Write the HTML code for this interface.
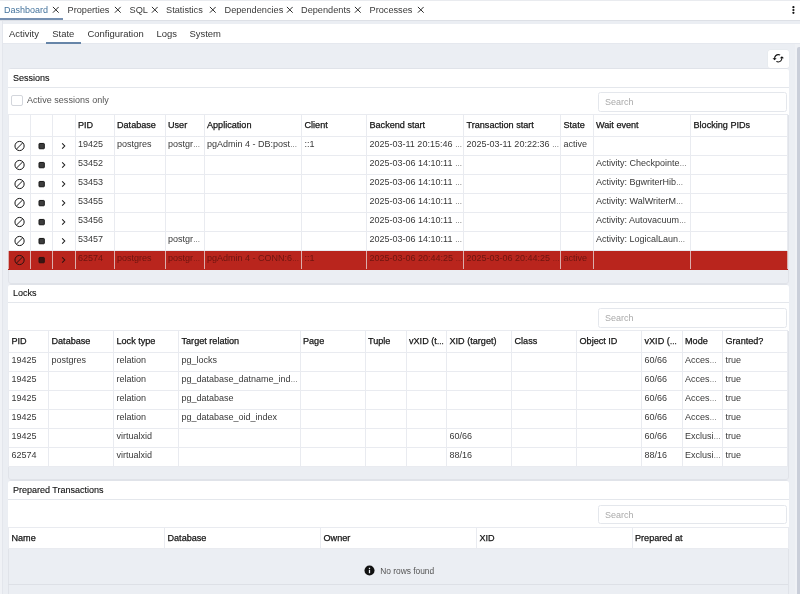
<!DOCTYPE html><html><head><meta charset="utf-8"><title>pgAdmin</title><style>
*{box-sizing:border-box}
html,body{margin:0;padding:0}
body{width:800px;height:594px;overflow:hidden;position:relative;background:#ebeef3;font-family:"Liberation Sans",sans-serif;font-size:9px;color:#222;line-height:1}
#w{position:absolute;left:0;top:0;width:800px;height:594px;overflow:hidden;will-change:transform}.abs{position:absolute}
#topbar{left:0;top:0;width:800px;height:21px;background:#fff;border-bottom:1px solid #dde0e6;border-top:1px solid #e9ebef}
.tab{position:absolute;top:0;height:19px;white-space:nowrap;font-size:9.2px;color:#3a3a3a}
.tab span{position:absolute;top:5px}
.tab.active{color:#44739c;font-size:9px}
.x{position:absolute;top:5.2px;width:7.6px;height:7.6px}
#subbar{left:2.5px;top:24px;width:797.5px;height:19px;background:#fff}
.sub{position:absolute;top:5px;white-space:nowrap;font-size:9.45px;color:#333}
.panel{position:absolute;left:8px;width:780.5px;background:#fff;border-radius:2px}
.ph{position:absolute;left:0;top:0;width:100%;height:19px;border-bottom:1px solid #e4e7ec}.pb{position:absolute;left:7.5px;width:781.5px;border:1px solid #e0e3e9;border-radius:3px}
.ph span{position:absolute;left:5px;top:5px;color:#111;-webkit-text-stroke:0.12px #111}
.search{position:absolute;left:589.5px;width:189px;height:19.5px;border:1px solid #e4e7ec;border-radius:2.5px;background:#fff}
.search span{position:absolute;left:6.5px;top:5px;color:#aaa}
table.g{position:absolute;left:0;border-collapse:collapse;table-layout:fixed;width:779.5px}
table.g th,table.g td{border:1px solid #e9ebf0;padding:0;text-align:left;font-weight:normal;overflow:hidden;white-space:nowrap;vertical-align:top}
table.g th{height:22px;background:#fff}
table.g td{height:19px;background:#fff}
table.g th div{padding:6px 0 0 2.5px;font-weight:normal;font-size:9.1px;-webkit-text-stroke:0.25px #151515;color:#151515}
table.g td div{color:#383838;padding:3px 0 0 2.5px;white-space:nowrap;overflow:hidden}
table.g tr.red td{background:linear-gradient(90deg,#cf8682 0,#cf8682 0.35px,#b9251d 0.35px,#b9251d calc(100% - 0.35px),#cf8682 calc(100% - 0.35px));border-left-color:#dcaeac;border-right-color:#dcaeac;border-bottom-color:#b9251d}table.g tr.red td div{color:#6d1510}table.g tr.red .ic{color:#2b1311}table.g tr.red .ic rect{fill:#3a1512}.e{font-size:7.2px;letter-spacing:-0.3px}
.g.p th{height:21px}.ic{display:block;margin:0 0 0 2px;color:#161616}
</style></head><body><div id="w"><div id="topbar" class="abs"><div class="tab active" style="left:4px"><span>Dashboard</span></div><svg class="x" style="left:51.7px" viewBox="0 0 10 10"><path d="M1.2 1.2 8.8 8.8M8.8 1.2 1.2 8.8" stroke="#2a2a2a" stroke-width="1.3" fill="none"/></svg><div class="tab" style="left:67.5px"><span>Properties</span></div><svg class="x" style="left:114.2px" viewBox="0 0 10 10"><path d="M1.2 1.2 8.8 8.8M8.8 1.2 1.2 8.8" stroke="#2a2a2a" stroke-width="1.3" fill="none"/></svg><div class="tab" style="left:129.5px"><span>SQL</span></div><svg class="x" style="left:150.8px" viewBox="0 0 10 10"><path d="M1.2 1.2 8.8 8.8M8.8 1.2 1.2 8.8" stroke="#2a2a2a" stroke-width="1.3" fill="none"/></svg><div class="tab" style="left:166px"><span>Statistics</span></div><svg class="x" style="left:208.5px" viewBox="0 0 10 10"><path d="M1.2 1.2 8.8 8.8M8.8 1.2 1.2 8.8" stroke="#2a2a2a" stroke-width="1.3" fill="none"/></svg><div class="tab" style="left:224.5px"><span>Dependencies</span></div><svg class="x" style="left:285.7px" viewBox="0 0 10 10"><path d="M1.2 1.2 8.8 8.8M8.8 1.2 1.2 8.8" stroke="#2a2a2a" stroke-width="1.3" fill="none"/></svg><div class="tab" style="left:301px"><span>Dependents</span></div><svg class="x" style="left:354.2px" viewBox="0 0 10 10"><path d="M1.2 1.2 8.8 8.8M8.8 1.2 1.2 8.8" stroke="#2a2a2a" stroke-width="1.3" fill="none"/></svg><div class="tab" style="left:369.5px"><span>Processes</span></div><svg class="x" style="left:416.5px" viewBox="0 0 10 10"><path d="M1.2 1.2 8.8 8.8M8.8 1.2 1.2 8.8" stroke="#2a2a2a" stroke-width="1.3" fill="none"/></svg><div class="abs" style="left:0;top:16.8px;width:62.5px;height:2px;background:#7690b1"></div><svg class="abs" style="left:790px;top:3px" width="7" height="12" viewBox="0 0 7 12"><circle cx="3.4" cy="3.2" r="1.1" fill="#111"/><circle cx="3.4" cy="6" r="1.1" fill="#111"/><circle cx="3.4" cy="8.8" r="1.1" fill="#111"/></svg></div><div id="subbar" class="abs"><span class="sub" style="left:6.5px">Activity</span><span class="sub" style="left:49.8px">State</span><span class="sub" style="left:85px">Configuration</span><span class="sub" style="left:154px">Logs</span><span class="sub" style="left:187px">System</span><div class="abs" style="left:43.5px;top:18px;width:34.8px;height:1.7px;background:#6685a8;z-index:2"></div></div><div class="abs" style="left:0;top:21px;width:1.7px;height:573px;background:#f0f2f6"></div><div class="abs" style="left:1.7px;top:21px;width:1px;height:573px;background:#e3e6ec"></div><div class="abs" style="left:2.5px;top:43px;width:797.5px;height:1.2px;background:#e5e8ee"></div><div class="abs" style="left:794.8px;top:44px;width:5.2px;height:550px;background:#eff1f5"></div><div class="abs" style="left:797px;top:46.8px;width:3px;height:548px;background:#c9ced9;border-radius:2px 0 0 0"></div><div class="abs" style="left:767.8px;top:49.6px;width:20.9px;height:18.1px;background:#fff;border-radius:2.5px;box-shadow:0 0 0 0.5px #e4e7ec"><svg class="abs" style="left:4.3px;top:2.8px" width="12.5" height="12.5" viewBox="0 0 24 24"><path d="M19 8l-4 4h3c0 3.31-2.69 6-6 6-1.01 0-1.97-.25-2.8-.7l-1.46 1.46C8.97 19.54 10.43 20 12 20c4.42 0 8-3.58 8-8h3l-4-4zM6 12c0-3.31 2.69-6 6-6 1.01 0 1.97.25 2.8.7l1.46-1.46C15.03 4.46 13.57 4 12 4c-4.42 0-8 3.58-8 8H1l4 4 4-4H6z" fill="#111"/></svg></div><div class="pb" style="top:68px;height:215.6px"></div><div class="pb" style="top:284.2px;height:195.6px"></div><div class="pb" style="top:480.2px;height:130px"></div><div class="panel" style="top:68.5px;height:214.5px;background:transparent"><div class="abs" style="left:0;top:0;width:100%;height:46px;background:#fff;border-radius:2px 2px 0 0"></div><div class="ph"><span>Sessions</span></div><div class="abs" style="left:3px;top:26px;width:11.5px;height:11.5px;border:1px solid #d3d6dc;border-radius:2px;background:#fff"></div><span class="abs" style="left:19px;top:27px;color:#555;letter-spacing:0.04px">Active sessions only</span><div class="search" style="top:23.5px"><span>Search</span></div><table class="g" style="top:45.5px"><colgroup><col style="width:22px"><col style="width:22px"><col style="width:22.5px"><col style="width:39px"><col style="width:51px"><col style="width:39px"><col style="width:97.5px"><col style="width:65px"><col style="width:97px"><col style="width:97px"><col style="width:32.5px"><col style="width:97.5px"><col style="width:97px"></colgroup><thead><tr><th><div></div></th><th><div></div></th><th><div></div></th><th><div>PID</div></th><th><div>Database</div></th><th><div>User</div></th><th><div>Application</div></th><th><div>Client</div></th><th><div>Backend start</div></th><th><div>Transaction start</div></th><th><div>State</div></th><th><div>Wait event</div></th><th><div>Blocking PIDs</div></th></tr></thead><tbody><tr class=""><td><div><svg class="ic" viewBox="0.9 0 24 24" width="12" height="12"><circle cx="12" cy="12" r="9.2" fill="none" stroke="currentColor" stroke-width="2"/><path d="M5.6 18.4 18.4 5.6" stroke="currentColor" stroke-width="2" fill="none"/></svg></div></td><td><div><svg class="ic" viewBox="0.9 0 24 24" width="12" height="12"><rect x="6.9" y="6.9" width="10.6" height="10.6" rx="1.2" fill="#3d3d3d" stroke="currentColor" stroke-width="2"/></svg></div></td><td><div><svg class="ic" viewBox="0.9 0 24 24" width="12" height="12"><path d="M9.2 6.8 14.4 12 9.2 17.2" stroke="currentColor" stroke-width="2.1" fill="none"/></svg></div></td><td><div>19425</div></td><td><div>postgres</div></td><td><div>postgr<span class="e">…</span></div></td><td><div>pgAdmin 4 - DB:post<span class="e">…</span></div></td><td><div>::1</div></td><td><div>2025-03-11 20:15:46 <span class="e">…</span></div></td><td><div>2025-03-11 20:22:36 <span class="e">…</span></div></td><td><div>active</div></td><td><div></div></td><td><div></div></td></tr><tr class=""><td><div><svg class="ic" viewBox="0.9 0 24 24" width="12" height="12"><circle cx="12" cy="12" r="9.2" fill="none" stroke="currentColor" stroke-width="2"/><path d="M5.6 18.4 18.4 5.6" stroke="currentColor" stroke-width="2" fill="none"/></svg></div></td><td><div><svg class="ic" viewBox="0.9 0 24 24" width="12" height="12"><rect x="6.9" y="6.9" width="10.6" height="10.6" rx="1.2" fill="#3d3d3d" stroke="currentColor" stroke-width="2"/></svg></div></td><td><div><svg class="ic" viewBox="0.9 0 24 24" width="12" height="12"><path d="M9.2 6.8 14.4 12 9.2 17.2" stroke="currentColor" stroke-width="2.1" fill="none"/></svg></div></td><td><div>53452</div></td><td><div></div></td><td><div></div></td><td><div></div></td><td><div></div></td><td><div>2025-03-06 14:10:11 <span class="e">…</span></div></td><td><div></div></td><td><div></div></td><td><div>Activity: Checkpointe<span class="e">…</span></div></td><td><div></div></td></tr><tr class=""><td><div><svg class="ic" viewBox="0.9 0 24 24" width="12" height="12"><circle cx="12" cy="12" r="9.2" fill="none" stroke="currentColor" stroke-width="2"/><path d="M5.6 18.4 18.4 5.6" stroke="currentColor" stroke-width="2" fill="none"/></svg></div></td><td><div><svg class="ic" viewBox="0.9 0 24 24" width="12" height="12"><rect x="6.9" y="6.9" width="10.6" height="10.6" rx="1.2" fill="#3d3d3d" stroke="currentColor" stroke-width="2"/></svg></div></td><td><div><svg class="ic" viewBox="0.9 0 24 24" width="12" height="12"><path d="M9.2 6.8 14.4 12 9.2 17.2" stroke="currentColor" stroke-width="2.1" fill="none"/></svg></div></td><td><div>53453</div></td><td><div></div></td><td><div></div></td><td><div></div></td><td><div></div></td><td><div>2025-03-06 14:10:11 <span class="e">…</span></div></td><td><div></div></td><td><div></div></td><td><div>Activity: BgwriterHib<span class="e">…</span></div></td><td><div></div></td></tr><tr class=""><td><div><svg class="ic" viewBox="0.9 0 24 24" width="12" height="12"><circle cx="12" cy="12" r="9.2" fill="none" stroke="currentColor" stroke-width="2"/><path d="M5.6 18.4 18.4 5.6" stroke="currentColor" stroke-width="2" fill="none"/></svg></div></td><td><div><svg class="ic" viewBox="0.9 0 24 24" width="12" height="12"><rect x="6.9" y="6.9" width="10.6" height="10.6" rx="1.2" fill="#3d3d3d" stroke="currentColor" stroke-width="2"/></svg></div></td><td><div><svg class="ic" viewBox="0.9 0 24 24" width="12" height="12"><path d="M9.2 6.8 14.4 12 9.2 17.2" stroke="currentColor" stroke-width="2.1" fill="none"/></svg></div></td><td><div>53455</div></td><td><div></div></td><td><div></div></td><td><div></div></td><td><div></div></td><td><div>2025-03-06 14:10:11 <span class="e">…</span></div></td><td><div></div></td><td><div></div></td><td><div>Activity: WalWriterM<span class="e">…</span></div></td><td><div></div></td></tr><tr class=""><td><div><svg class="ic" viewBox="0.9 0 24 24" width="12" height="12"><circle cx="12" cy="12" r="9.2" fill="none" stroke="currentColor" stroke-width="2"/><path d="M5.6 18.4 18.4 5.6" stroke="currentColor" stroke-width="2" fill="none"/></svg></div></td><td><div><svg class="ic" viewBox="0.9 0 24 24" width="12" height="12"><rect x="6.9" y="6.9" width="10.6" height="10.6" rx="1.2" fill="#3d3d3d" stroke="currentColor" stroke-width="2"/></svg></div></td><td><div><svg class="ic" viewBox="0.9 0 24 24" width="12" height="12"><path d="M9.2 6.8 14.4 12 9.2 17.2" stroke="currentColor" stroke-width="2.1" fill="none"/></svg></div></td><td><div>53456</div></td><td><div></div></td><td><div></div></td><td><div></div></td><td><div></div></td><td><div>2025-03-06 14:10:11 <span class="e">…</span></div></td><td><div></div></td><td><div></div></td><td><div>Activity: Autovacuum<span class="e">…</span></div></td><td><div></div></td></tr><tr class=""><td><div><svg class="ic" viewBox="0.9 0 24 24" width="12" height="12"><circle cx="12" cy="12" r="9.2" fill="none" stroke="currentColor" stroke-width="2"/><path d="M5.6 18.4 18.4 5.6" stroke="currentColor" stroke-width="2" fill="none"/></svg></div></td><td><div><svg class="ic" viewBox="0.9 0 24 24" width="12" height="12"><rect x="6.9" y="6.9" width="10.6" height="10.6" rx="1.2" fill="#3d3d3d" stroke="currentColor" stroke-width="2"/></svg></div></td><td><div><svg class="ic" viewBox="0.9 0 24 24" width="12" height="12"><path d="M9.2 6.8 14.4 12 9.2 17.2" stroke="currentColor" stroke-width="2.1" fill="none"/></svg></div></td><td><div>53457</div></td><td><div></div></td><td><div>postgr<span class="e">…</span></div></td><td><div></div></td><td><div></div></td><td><div>2025-03-06 14:10:11 <span class="e">…</span></div></td><td><div></div></td><td><div></div></td><td><div>Activity: LogicalLaun<span class="e">…</span></div></td><td><div></div></td></tr><tr class="red"><td><div><svg class="ic" viewBox="0.9 0 24 24" width="12" height="12"><circle cx="12" cy="12" r="9.2" fill="none" stroke="currentColor" stroke-width="2"/><path d="M5.6 18.4 18.4 5.6" stroke="currentColor" stroke-width="2" fill="none"/></svg></div></td><td><div><svg class="ic" viewBox="0.9 0 24 24" width="12" height="12"><rect x="6.9" y="6.9" width="10.6" height="10.6" rx="1.2" fill="#3d3d3d" stroke="currentColor" stroke-width="2"/></svg></div></td><td><div><svg class="ic" viewBox="0.9 0 24 24" width="12" height="12"><path d="M9.2 6.8 14.4 12 9.2 17.2" stroke="currentColor" stroke-width="2.1" fill="none"/></svg></div></td><td><div>62574</div></td><td><div>postgres</div></td><td><div>postgr<span class="e">…</span></div></td><td><div>pgAdmin 4 - CONN:6<span class="e">…</span></div></td><td><div>::1</div></td><td><div>2025-03-06 20:44:25 <span class="e">…</span></div></td><td><div>2025-03-06 20:44:25 <span class="e">…</span></div></td><td><div>active</div></td><td><div></div></td><td><div></div></td></tr></tbody></table></div><div class="panel" style="top:283.5px;height:196px;background:transparent"><div class="abs" style="left:0;top:1px;width:100%;height:46px;background:#fff;border-radius:2px 2px 0 0"></div><div class="ph"><span>Locks</span></div><div class="search" style="top:24.5px"><span>Search</span></div><table class="g" style="top:46px"><colgroup><col style="width:40px"><col style="width:65px"><col style="width:65px"><col style="width:121.5px"><col style="width:65px"><col style="width:41px"><col style="width:40.5px"><col style="width:65px"><col style="width:65px"><col style="width:65px"><col style="width:40.5px"><col style="width:40.5px"><col style="width:64.5px"></colgroup><thead><tr><th><div>PID</div></th><th><div>Database</div></th><th><div>Lock type</div></th><th><div>Target relation</div></th><th><div>Page</div></th><th><div>Tuple</div></th><th><div>vXID (t<span class="e">…</span></div></th><th><div>XID (target)</div></th><th><div>Class</div></th><th><div>Object ID</div></th><th><div>vXID (<span class="e">…</span></div></th><th><div>Mode</div></th><th><div>Granted?</div></th></tr></thead><tbody><tr class=""><td><div>19425</div></td><td><div>postgres</div></td><td><div>relation</div></td><td><div>pg_locks</div></td><td><div></div></td><td><div></div></td><td><div></div></td><td><div></div></td><td><div></div></td><td><div></div></td><td><div>60/66</div></td><td><div>Acces<span class="e">…</span></div></td><td><div>true</div></td></tr><tr class=""><td><div>19425</div></td><td><div></div></td><td><div>relation</div></td><td><div>pg_database_datname_ind<span class="e">…</span></div></td><td><div></div></td><td><div></div></td><td><div></div></td><td><div></div></td><td><div></div></td><td><div></div></td><td><div>60/66</div></td><td><div>Acces<span class="e">…</span></div></td><td><div>true</div></td></tr><tr class=""><td><div>19425</div></td><td><div></div></td><td><div>relation</div></td><td><div>pg_database</div></td><td><div></div></td><td><div></div></td><td><div></div></td><td><div></div></td><td><div></div></td><td><div></div></td><td><div>60/66</div></td><td><div>Acces<span class="e">…</span></div></td><td><div>true</div></td></tr><tr class=""><td><div>19425</div></td><td><div></div></td><td><div>relation</div></td><td><div>pg_database_oid_index</div></td><td><div></div></td><td><div></div></td><td><div></div></td><td><div></div></td><td><div></div></td><td><div></div></td><td><div>60/66</div></td><td><div>Acces<span class="e">…</span></div></td><td><div>true</div></td></tr><tr class=""><td><div>19425</div></td><td><div></div></td><td><div>virtualxid</div></td><td><div></div></td><td><div></div></td><td><div></div></td><td><div></div></td><td><div>60/66</div></td><td><div></div></td><td><div></div></td><td><div>60/66</div></td><td><div>Exclusi<span class="e">…</span></div></td><td><div>true</div></td></tr><tr class=""><td><div>62574</div></td><td><div></div></td><td><div>virtualxid</div></td><td><div></div></td><td><div></div></td><td><div></div></td><td><div></div></td><td><div>88/16</div></td><td><div></div></td><td><div></div></td><td><div>88/16</div></td><td><div>Exclusi<span class="e">…</span></div></td><td><div>true</div></td></tr></tbody></table></div><div class="panel" style="top:481px;height:113px;background:transparent"><div class="abs" style="left:0;top:0;width:100%;height:47px;background:#fff;border-radius:2px 2px 0 0"></div><div class="ph"><span>Prepared Transactions</span></div><div class="search" style="top:23.5px"><span>Search</span></div><table class="g p" style="top:46px"><colgroup><col style="width:156px"><col style="width:156px"><col style="width:156px"><col style="width:155.5px"><col style="width:156px"></colgroup><thead><tr><th><div>Name</div></th><th><div>Database</div></th><th><div>Owner</div></th><th><div>XID</div></th><th><div>Prepared at</div></th></tr></thead><tbody></tbody></table><div class="abs" style="left:0;top:68px;width:779.5px;height:36px;border-bottom:1px solid #dde0e6"></div><svg class="abs" style="left:356.2px;top:84.2px" width="11" height="11" viewBox="0 0 24 24"><circle cx="12" cy="12" r="11" fill="#111"/><rect x="10.6" y="10.5" width="2.8" height="7.5" fill="#ebeef3"/><rect x="10.6" y="6" width="2.8" height="2.8" fill="#ebeef3"/></svg><span class="abs" style="left:372.2px;top:85.5px;font-size:8.4px;color:#555">No rows found</span></div></div></body></html>
